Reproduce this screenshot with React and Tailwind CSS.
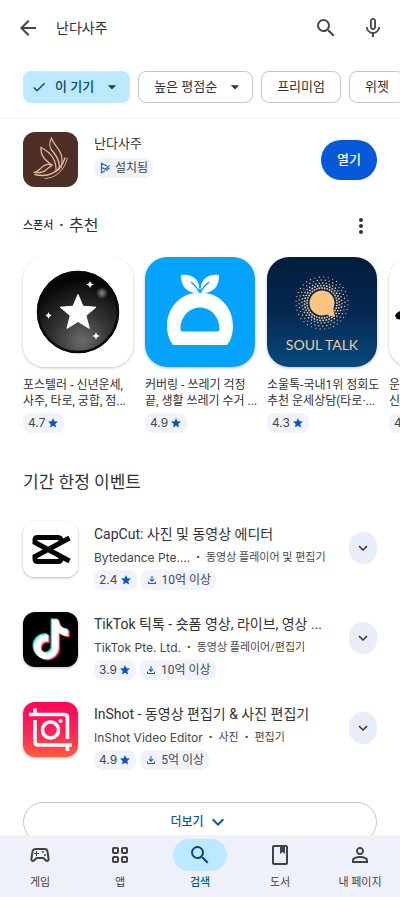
import React from 'react'
import {
  MdArrowBack,
  MdSearch,
  MdMicNone,
  MdArrowDropDown,
  MdCheck,
  MdMoreVert,
  MdStar,
  MdKeyboardArrowDown,
  MdOutlineFileDownload,
  MdOutlineSportsEsports,
  MdPersonOutline,
} from 'react-icons/md'

const NandaLogo = () => (
  <svg viewBox="0 0 55 55" className="size-full bg-[#4e2f28]" fill="none" stroke="#e3b9a0" strokeLinecap="round" strokeLinejoin="round">
    <path d="M28.500 6C25 13 27 17 31 21C36 27 37 32 36 38" strokeWidth="1.300" />
    <path d="M28.500 6C31 14 39 18 39 27C39 31 39 33 38 36" strokeWidth="1.200" />
    <path d="M18 15.500C17.500 24 22 28 29 33" strokeWidth="1.300" />
    <path d="M18 15.500C27 20 34 27 33 40" strokeWidth="1.200" />
    <path d="M29 33C23 31 20 34 17 37C15 39 13 40 11 40.500C17 41 21 40 23 38C25 36 27 35 29 33" strokeWidth="1.200" />
    <path d="M12 42.500C24 46 37 41 42 26" strokeWidth="1.500" />
    <path d="M22 46.500C33 46 41 39 44.500 26" strokeWidth=".9" />
  </svg>
)

const StarOrbLogo = () => (
  <svg viewBox="0 0 110 110" className="size-full bg-white">
    <defs>
      <radialGradient id="orb" cx=".55" cy=".85" r=".75">
        <stop offset="0" stopColor="#6a6a6a" />
        <stop offset=".45" stopColor="#353535" />
        <stop offset="1" stopColor="#050505" />
      </radialGradient>
      <radialGradient id="glow">
        <stop offset="0" stopColor="#888" />
        <stop offset="1" stopColor="#888" stopOpacity="0" />
      </radialGradient>
    </defs>
    <circle cx="55" cy="55" r="41" fill="url(#orb)" />
    <circle cx="55" cy="55" r="40" fill="none" stroke="#0a0a0a" strokeWidth="2.500" />
    <circle cx="79" cy="36" r="6" fill="url(#glow)" />
    <path
      d="M55 37.500L60 49.200L73 50.200L63 58.600L66.300 71.400L55 64.500L44 71.400L47.200 58.600L37.200 50.200L50 49.200Z"
      fill="#fff"
      stroke="#fff"
      strokeLinejoin="round"
    />
    <g fill="#fff">
      <path d="M67 23.500Q67.500 27 71 27.500Q67.500 28 67 31.500Q66.500 28 63 27.500Q66.500 27 67 23.500Z" />
      <path d="M73 75Q73.500 78.500 77 79Q73.500 79.500 73 83Q72.500 79.500 69 79Q72.500 78.500 73 75Z" />
      <path d="M25.500 55Q26 58 28.500 58.500Q26 59 25.500 62Q25 59 22.500 58.500Q25 58 25.500 55Z" />
    </g>
  </svg>
)

const CoveringLogo = () => (
  <svg viewBox="0 0 110 110" className="size-full bg-[#05a3fc]">
    <path
      d="M28 88C24 83 22 76 22 69C22 50 36 35.500 55 35.500C74 35.500 88 50 88 69C88 76 86 83 82 88ZM38 74.500H72Q74.500 74.500 74.500 72C74.500 60 66 50.500 55 50.500C44 50.500 35.500 60 35.500 72Q35.500 74.500 38 74.500Z"
      fill="#fff"
      fillRule="evenodd"
    />
    <path d="M54 36C43 37 35.500 30 36 18C48 16.500 56 23 54 36Z" fill="#fff" />
    <path d="M56 36C67 37 74.500 30 74 18C62 16.500 54 23 56 36Z" fill="#fff" />
    <path d="M46 25C50 28 53 32 55 36M64 25C60 28 57 32 55 36" stroke="#05a3fc" strokeWidth="1.300" fill="none" />
  </svg>
)

const RAYS = Array.from({ length: 36 }, (_, i) => i)
const RINGS = [
  { r: 15, size: 0.9 },
  { r: 17.5, size: 0.9 },
  { r: 20, size: 0.8 },
  { r: 23, size: 0.7 },
  { r: 26, size: 0.6 },
]

const SoulTalkLogo = () => (
  <svg viewBox="0 0 110 110" className="size-full">
    <defs>
      <linearGradient id="night" x1="0" y1="0" x2="0" y2="1">
        <stop offset="0" stopColor="#021d3c" />
        <stop offset=".5" stopColor="#042850" />
        <stop offset="1" stopColor="#064a80" />
      </linearGradient>
    </defs>
    <rect width="110" height="110" fill="url(#night)" />
    {RINGS.map((ring, k) =>
      RAYS.map((i) => {
        const angle = ((i + k * 0.6) * Math.PI) / 18
        return (
          <circle
            key={`${k}-${i}`}
            cx={55 + ring.r * Math.cos(angle)}
            cy={46 + ring.r * Math.sin(angle)}
            r={ring.size}
            fill="#f5cfa0"
          />
        )
      })
    )}
    <circle cx="55" cy="46" r="12.500" fill="#fdc47f" />
    <path d="M58 57L67.500 60L66 48Z" fill="#fdc47f" />
    <text x="55" y="92.500" textAnchor="middle" fontSize="14" fontFamily="Lato, sans-serif" fill="#e9cf9e">
      SOUL TALK
    </text>
  </svg>
)

const BrushLogo = () => (
  <svg viewBox="0 0 110 110" className="size-full bg-white">
    <path d="M6 59C7 55 12 55 15 50C22 45 30 45 36 50V62C25 60 14 64 8 62Z" fill="#050505" />
  </svg>
)

const CapCutLogo = () => (
  <svg viewBox="0 0 55 55" className="size-full bg-white" fill="none" stroke="#050505" strokeWidth="5">
    <path d="M46.500 16L12 34.500V37Q12 39.500 14.500 39.500H35Q38 39.500 38 36" />
    <path d="M46.500 39L12 20.500V18Q12 15.500 14.500 15.500H35Q38 15.500 38 19" />
  </svg>
)

const TIKTOK_NOTE =
  'M12.525.02c1.31-.02 2.61-.01 3.91-.02.08 1.53.63 3.09 1.75 4.17 1.12 1.11 2.7 1.62 4.24 1.79v4.03c-1.44-.05-2.89-.35-4.2-.97-.57-.26-1.1-.59-1.62-.93-.01 2.92.01 5.84-.02 8.75-.08 1.4-.54 2.79-1.35 3.94-1.31 1.92-3.58 3.17-5.91 3.21-1.43.08-2.86-.31-4.08-1.03-2.02-1.19-3.44-3.37-3.65-5.71-.02-.5-.03-1-.01-1.49.18-1.9 1.12-3.72 2.58-4.96 1.66-1.44 3.98-2.13 6.15-1.72.02 1.48-.04 2.96-.04 4.44-.99-.32-2.15-.23-3.02.37-.63.41-1.11 1.04-1.36 1.75-.21.51-.15 1.07-.14 1.61.24 1.64 1.82 3.02 3.5 2.87 1.12-.01 2.19-.66 2.77-1.61.19-.33.4-.67.41-1.06.1-1.79.06-3.57.07-5.36.01-4.03-.01-8.05.02-12.07z'

const TikTokLogo = () => (
  <svg viewBox="0 0 55 55" className="size-full bg-black">
    <path d={TIKTOK_NOTE} transform="translate(7 6.500) scale(1.650)" fill="#25f4ee" />
    <path d={TIKTOK_NOTE} transform="translate(9.800 8.800) scale(1.650)" fill="#fe2c55" />
    <path d={TIKTOK_NOTE} transform="translate(8.400 7.600) scale(1.650)" fill="#fff" />
  </svg>
)

const InShotLogo = () => (
  <svg viewBox="0 0 55 55" className="size-full" fill="none" stroke="#fff" strokeWidth="3.600">
    <defs>
      <linearGradient id="inshot" x1="0" y1="0" x2="0" y2="1">
        <stop offset="0" stopColor="#fd0657" />
        <stop offset=".5" stopColor="#fe1f55" />
        <stop offset="1" stopColor="#ff5a3f" />
      </linearGradient>
    </defs>
    <rect width="55" height="55" fill="url(#inshot)" stroke="none" />
    <path d="M6 12.500H41Q44.500 12.500 44.500 16V37" />
    <path d="M12 6.500V13M12 18V39.500Q12 43 15.500 43H49M44.500 43V49" />
    <circle cx="27.500" cy="28" r="8" />
    <circle cx="37.500" cy="19" r="2" fill="#fff" stroke="none" />
  </svg>
)

const InstalledIcon = () => (
  <svg viewBox="0 0 12 12" className="size-3" fill="none" stroke="#1a73d1" strokeWidth="1.300">
    <path d="M6 9L2.500 10.800V1.200L8 4M3 5.500L6 7.500L10.500 3.500M10.500 6L7 8.500" />
  </svg>
)

const AppsIcon = () => (
  <svg viewBox="0 0 24 24" className="size-6" fill="none" stroke="currentColor" strokeWidth="2">
    <rect x="5" y="5" width="5" height="5" rx="1" />
    <rect x="14" y="5" width="5" height="5" rx="1" />
    <rect x="5" y="14" width="5" height="5" rx="1" />
    <rect x="14" y="14" width="5" height="5" rx="1" />
  </svg>
)

const BookIcon = () => (
  <svg viewBox="0 0 24 24" className="size-6" fill="none" stroke="currentColor" strokeWidth="2">
    <rect x="5" y="3" width="14" height="18" rx="1" />
    <path d="M12 3H17V11L14.500 9L12 11Z" fill="currentColor" stroke="none" />
  </svg>
)

const sponsored = [
  { lines: ['포스텔러 - 신년운세,', '사주, 타로, 궁합, 점...'], rating: '4.7', Logo: StarOrbLogo },
  { lines: ['커버링 - 쓰레기 걱정', '끝, 생활 쓰레기 수거 ...'], rating: '4.9', Logo: CoveringLogo },
  { lines: ['소울톡-국내1위 정회도', '추천 운세상담(타로·...'], rating: '4.3', Logo: SoulTalkLogo },
  { lines: ['운세', '신년'], rating: '4.8', Logo: BrushLogo },
]

const events = [
  {
    title: 'CapCut: 사진 및 동영상 에디터',
    developer: 'Bytedance Pte....',
    categories: ['동영상 플레이어 및 편집기'],
    rating: '2.4',
    downloads: '10억 이상',
    Logo: CapCutLogo,
  },
  {
    title: 'TikTok 틱톡 - 숏폼 영상, 라이브, 영상 ...',
    developer: 'TikTok Pte. Ltd.',
    categories: ['동영상 플레이어/편집기'],
    rating: '3.9',
    downloads: '10억 이상',
    Logo: TikTokLogo,
  },
  {
    title: 'InShot - 동영상 편집기 & 사진 편집기',
    developer: 'InShot Video Editor',
    categories: ['사진', '편집기'],
    rating: '4.9',
    downloads: '5억 이상',
    Logo: InShotLogo,
  },
]

const tabs = [
  { label: '게임', icon: <MdOutlineSportsEsports className="size-6" /> },
  { label: '앱', icon: <AppsIcon /> },
  { label: '검색', icon: <MdSearch className="size-6" />, active: true },
  { label: '도서', icon: <BookIcon /> },
  { label: '내 페이지', icon: <MdPersonOutline className="size-6" /> },
]

const Badge = ({ children }) => (
  <span className="inline-flex h-5 items-center gap-1 rounded-lg bg-[#f0f3fb] px-[5px] text-xs whitespace-nowrap text-[#454749]">
    {children}
  </span>
)

const Rating = ({ value }) => (
  <Badge>
    <span className="font-['Inter',sans-serif]">{value}</span>
    <MdStar className="-ml-0.5 size-3 text-[#0b57c8]" />
  </Badge>
)

const App = () => {
  return (
    <div className="flex h-screen flex-col overflow-hidden bg-white font-['Roboto','Noto_Sans_CJK_KR',sans-serif] text-[#303234]">
      <header className="flex h-14 shrink-0 items-center pr-[15px] pl-4">
        <button type="button" aria-label="뒤로" className="text-[#444648]">
          <MdArrowBack className="size-6" />
        </button>
        <h1 className="ml-4 flex-1 text-sm">난다사주</h1>
        <button type="button" aria-label="검색" className="mr-[23px] text-[#444648]">
          <MdSearch className="size-6" />
        </button>
        <button type="button" aria-label="음성 검색" className="text-[#444648]">
          <MdMicNone className="size-6" />
        </button>
      </header>

      {/* Filters */}
      <div className="flex shrink-0 gap-2 overflow-hidden border-b border-[#f3f3f4] pt-[15px] pb-[15px] pl-[23px] text-[13px]">
        <button type="button" className="flex h-8 shrink-0 items-center rounded-lg bg-[#bce9ff] pr-2 pl-2 font-medium text-[#004a77]">
          <MdCheck className="mr-2 size-4" />
          이 기기
          <MdArrowDropDown className="ml-2 size-5" />
        </button>
        <button type="button" className="flex h-8 shrink-0 items-center rounded-lg border border-[#c4c7c5] pr-[7px] pl-[15px]">
          높은 평점순
          <MdArrowDropDown className="ml-2 size-5" />
        </button>
        <button type="button" className="h-8 shrink-0 rounded-lg border border-[#c4c7c5] px-[15px]">
          프리미엄
        </button>
        <button type="button" className="h-8 shrink-0 rounded-lg border border-[#c4c7c5] px-[15px]">
          위젯
        </button>
      </div>

      <main className="min-h-0 flex-1 overflow-hidden">
        {/* Installed app */}
        <section className="flex items-center px-[23px] pt-[13px]">
          <div className="size-[55px] shrink-0 overflow-hidden rounded-xl">
            <NandaLogo />
          </div>
          <div className="ml-4 min-w-0 flex-1 pb-2">
            <h2 className="text-[13px] leading-5">난다사주</h2>
            <div className="mt-1 flex">
              <Badge>
                <InstalledIcon />
                설치됨
              </Badge>
            </div>
          </div>
          <button type="button" className="h-10 w-14 rounded-full bg-[#0558d8] text-[13px] font-medium text-white">
            열기
          </button>
        </section>

        {/* Sponsored */}
        <section>
          <div className="mt-6 flex h-[30px] items-center pr-[27px] pl-[23px]">
            <h2 className="flex flex-1 items-center gap-1.5">
              <span className="text-[11px] font-medium">스폰서</span>
              <span className="text-[11px]">•</span>
              <span className="text-base">추천</span>
            </h2>
            <button type="button" aria-label="더보기 메뉴">
              <MdMoreVert className="size-6" />
            </button>
          </div>
          <ul className="mt-4 flex gap-3 overflow-hidden pl-[23px]">
            {sponsored.map(({ lines, rating, Logo }) => (
              <li key={rating} className="w-[110px] shrink-0">
                <div className="size-[110px] overflow-hidden rounded-[22px] shadow-[0_1px_3px_rgba(0,0,0,0.25)]">
                  <Logo />
                </div>
                <p className="mt-2.5 text-xs leading-4 whitespace-nowrap">
                  {lines[0]}
                  <br />
                  {lines[1]}
                </p>
                <div className="mt-1 flex">
                  <Rating value={rating} />
                </div>
              </li>
            ))}
          </ul>
        </section>

        {/* Limited time events */}
        <section className="px-[23px] pt-[35px]">
          <h2 className="text-[17px] leading-7">기간 한정 이벤트</h2>
          <ul className="mt-6 flex flex-col gap-5">
            {events.map(({ title, developer, categories, rating, downloads, Logo }) => (
              <li key={title} className="flex h-[70px] items-start">
                <div className="mt-0.5 size-[55px] shrink-0 overflow-hidden rounded-xl shadow-[0_1px_3px_rgba(0,0,0,0.3)]">
                  <Logo />
                </div>
                <div className="ml-4 min-w-0 flex-1 pt-0.5">
                  <h3 className="truncate text-sm leading-6">{title}</h3>
                  <p className="flex gap-1.5 text-[11px] leading-6 whitespace-nowrap text-[#454749]">
                    <span className="font-['Inter',sans-serif] text-xs leading-6">{developer}</span>
                    {categories.map((category) => (
                      <React.Fragment key={category}>
                        <span>•</span>
                        <span>{category}</span>
                      </React.Fragment>
                    ))}
                  </p>
                  <div className="flex gap-1">
                    <Rating value={rating} />
                    <Badge>
                      <MdOutlineFileDownload className="size-3 text-[#0b57c8]" />
                      {downloads}
                    </Badge>
                  </div>
                </div>
                <button
                  type="button"
                  aria-label="펼치기"
                  className="mt-3 ml-3 flex h-8 w-7 shrink-0 items-center justify-center rounded-full bg-[#e8edf9]"
                >
                  <MdKeyboardArrowDown className="size-[18px]" />
                </button>
              </li>
            ))}
          </ul>
          <button
            type="button"
            className="mt-8 flex h-10 w-full items-center justify-center gap-0.5 rounded-full border border-[#c4c7c5] text-xs font-medium text-[#0b57a8]"
          >
            더보기
            <MdKeyboardArrowDown className="size-6" />
          </button>
        </section>
      </main>

      <nav className="grid shrink-0 grid-cols-5 bg-[#eef1f9] pt-1 pb-1 text-[#404244]">
        {tabs.map(({ label, icon, active }) => (
          <a
            key={label}
            href="#"
            aria-current={active ? 'page' : undefined}
            className={`flex flex-col items-center gap-0.5 text-[11px] leading-5 ${active ? 'font-medium text-[#006493]' : ''}`}
          >
            <span
              className={`flex h-8 w-[54px] items-center justify-center rounded-full ${active ? 'bg-[#bce9ff] text-[#004a77]' : ''}`}
            >
              {icon}
            </span>
            {label}
          </a>
        ))}
      </nav>
    </div>
  )
}

export default App
